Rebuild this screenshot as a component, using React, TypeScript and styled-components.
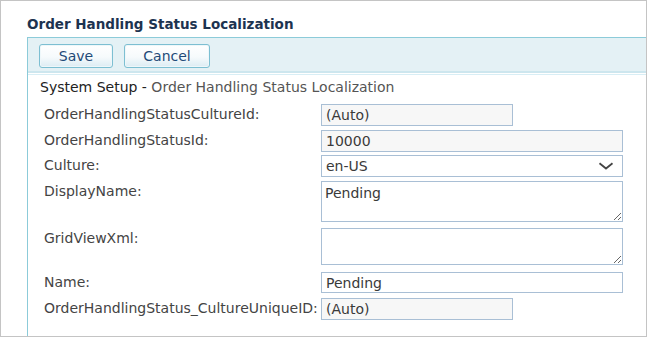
import styled, { createGlobalStyle } from 'styled-components';

const GlobalStyle = createGlobalStyle`
  html, body {
    margin: 0;
    padding: 0;
    background: #ffffff;
  }
  body {
    font-family: "DejaVu Sans", Verdana, sans-serif;
    font-size: 14px;
    color: #333333;
  }
`;

type FieldDef = {
  label: string;
  value: string;
  kind: 'input' | 'select' | 'textarea';
  width: number;
  height: number;
  readOnly?: boolean;
  top: number;
};

const fields: FieldDef[] = [
  { label: 'OrderHandlingStatusCultureId:', value: '(Auto)', kind: 'input', width: 192, height: 22, readOnly: true, top: 0 },
  { label: 'OrderHandlingStatusId:', value: '10000', kind: 'input', width: 302, height: 22, readOnly: true, top: 4 },
  { label: 'Culture:', value: 'en-US', kind: 'select', width: 302, height: 22, top: 3 },
  { label: 'DisplayName:', value: 'Pending', kind: 'textarea', width: 302, height: 41, top: 4 },
  { label: 'GridViewXml:', value: '', kind: 'textarea', width: 302, height: 37, top: 6 },
  { label: 'Name:', value: 'Pending', kind: 'input', width: 302, height: 21, top: 7 },
  { label: 'OrderHandlingStatus_CultureUniqueID:', value: '(Auto)', kind: 'input', width: 192, height: 22, readOnly: true, top: 5 },
];

export default function App() {
  return (
    <>
      <GlobalStyle />
      <Page>
        <Title>Order Handling Status Localization</Title>
        <Panel>
          <Toolbar>
            <Button $width={74}>Save</Button>
            <Button $width={86}>Cancel</Button>
          </Toolbar>
          <Breadcrumb>
            <Crumb>System Setup - </Crumb>
            <CrumbCurrent>Order Handling Status Localization</CrumbCurrent>
          </Breadcrumb>
          <Form>
            {fields.map((f) => (
              <Row key={f.label} $top={f.top}>
                <Label>{f.label}</Label>
                {f.kind === 'input' && (
                  <TextInput
                    $width={f.width}
                    $height={f.height}
                    $readOnly={!!f.readOnly}
                    readOnly
                    value={f.value}
                  />
                )}
                {f.kind === 'select' && (
                  <SelectBox $width={f.width} $height={f.height}>
                    <span>{f.value}</span>
                    <svg width="16" height="8" viewBox="0 0 16 8">
                      <path d="M1.5 1.2 L8 6.5 L14.5 1.2" fill="none" stroke="#444" strokeWidth="1.8" />
                    </svg>
                  </SelectBox>
                )}
                {f.kind === 'textarea' && (
                  <TextArea $width={f.width} $height={f.height} readOnly value={f.value} />
                )}
              </Row>
            ))}
          </Form>
        </Panel>
      </Page>
    </>
  );
}

const Page = styled.div`
  box-sizing: border-box;
  width: 647px;
  height: 337px;
  border: 1px solid #c4c4c4;
  display: flex;
  flex-direction: column;
  overflow: hidden;
`;

const Title = styled.h1`
  margin: 0;
  height: 36px;
  box-sizing: border-box;
  padding: 13px 0 0 26px;
  font-size: 13.5px;
  line-height: 20px;
  font-weight: bold;
  color: #1d3350;
`;

const Panel = styled.div`
  flex: 1;
  margin-left: 26px;
  border-left: 1px solid #8ccbd9;
  display: flex;
  flex-direction: column;
`;

const Toolbar = styled.div`
  height: 36px;
  box-sizing: border-box;
  border-top: 1px solid #8ccbd9;
  border-bottom: 2px solid #cde6ee;
  background: #e4f1f5;
  display: flex;
  align-items: flex-start;
  gap: 11px;
  padding: 6px 0 0 11px;
  position: relative;
  margin-bottom: 2px;

  &::after {
    content: '';
    position: absolute;
    left: 0;
    right: 0;
    bottom: -4px;
    height: 1px;
    background: #d8eef5;
  }
`;

const Button = styled.button<{ $width: number }>`
  width: ${(p) => p.$width}px;
  height: 24px;
  box-sizing: border-box;
  border: 1px solid #7dbfd2;
  border-radius: 3px;
  background: linear-gradient(to bottom, #ffffff 0%, #f6fafc 55%, #dcecf3 100%);
  box-shadow: inset 0 0 0 1px #eef7fa;
  font-family: "DejaVu Sans", Verdana, sans-serif;
  font-size: 14px;
  color: #1f4a78;
  padding: 0;
  line-height: 20px;
`;

const Breadcrumb = styled.div`
  padding: 2px 0 0 12px;
  line-height: 20px;
  height: 22px;
  box-sizing: border-box;
  font-size: 14px;
`;

const Crumb = styled.span`
  color: #222222;
`;

const CrumbCurrent = styled.span`
  color: #555555;
`;

const Form = styled.div`
  display: flex;
  flex-direction: column;
  padding: 7px 0 0 16px;
`;

const Row = styled.div<{ $top: number }>`
  display: grid;
  grid-template-columns: 277px auto;
  align-items: start;
  margin-top: ${(p) => p.$top}px;
`;

const Label = styled.label`
  font-size: 14px;
  line-height: 20px;
  color: #444444;
  white-space: nowrap;
`;

const fieldBase = `
  box-sizing: border-box;
  border: 1px solid #a9bfd5;
  font-family: "DejaVu Sans", Verdana, sans-serif;
  font-size: 14px;
  color: #3a3a3a;
  margin: 0;
  outline: none;
`;

const TextInput = styled.input<{ $width: number; $height: number; $readOnly: boolean }>`
  ${fieldBase}
  width: ${(p) => p.$width}px;
  height: ${(p) => p.$height}px;
  padding: 0 4px;
  background: ${(p) => (p.$readOnly ? '#f7f7f7' : '#ffffff')};
`;

const SelectBox = styled.div<{ $width: number; $height: number }>`
  ${fieldBase}
  width: ${(p) => p.$width}px;
  height: ${(p) => p.$height}px;
  padding: 0 8px 0 4px;
  display: flex;
  align-items: center;
  justify-content: space-between;
  background: #ffffff;
`;

const TextArea = styled.textarea<{ $width: number; $height: number }>`
  ${fieldBase}
  width: ${(p) => p.$width}px;
  height: ${(p) => p.$height}px;
  padding: 3px 3px;
  background: #ffffff;
  resize: both;
  display: block;
`;
